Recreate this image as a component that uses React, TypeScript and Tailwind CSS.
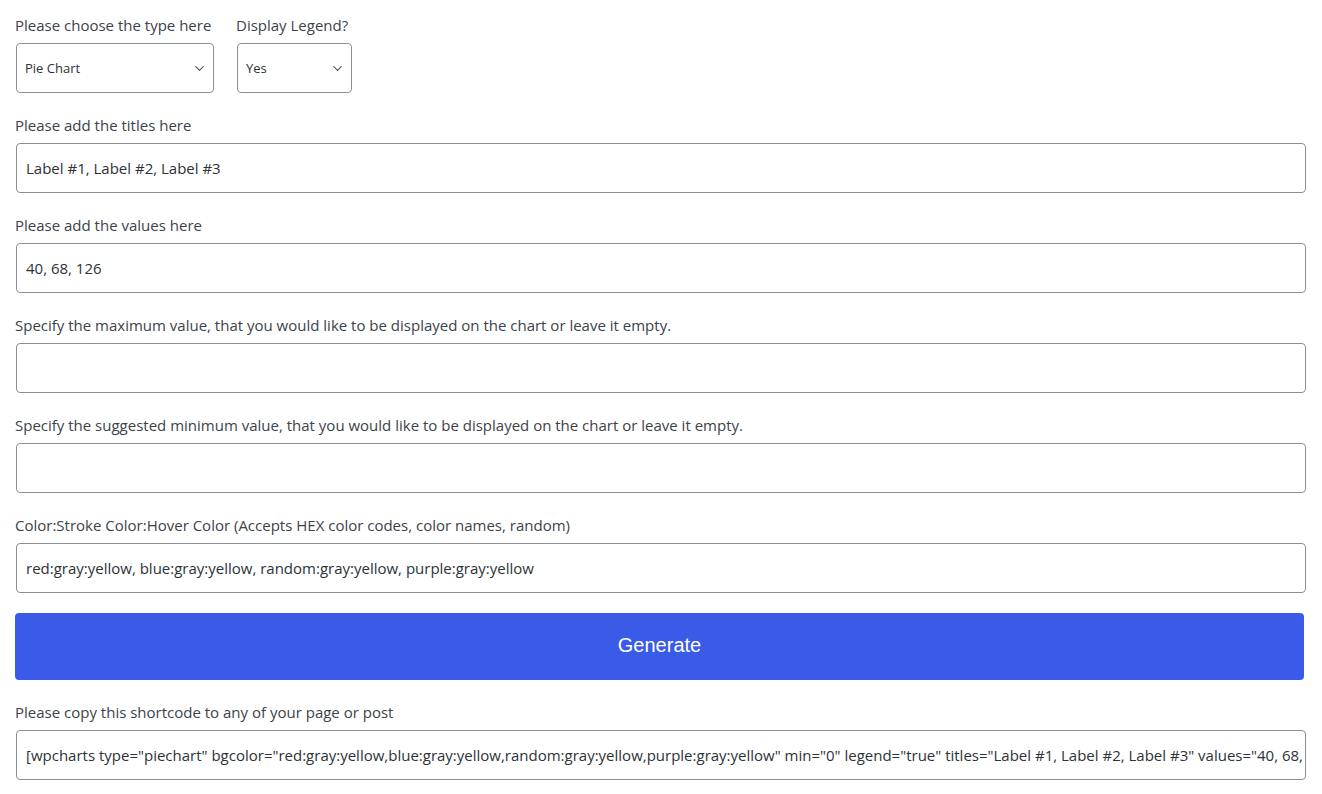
import { ChevronDown } from 'lucide-react';

const font = { fontFamily: '"Open Sans", "Noto Sans", sans-serif' };

function Field({ label, value }: { label: string; value?: string }) {
  return (
    <div className="flex flex-col">
      <label className="text-[15px] leading-6 text-[#3c434a]">{label}</label>
      <div className="mt-[6px] ml-px flex h-[50px] w-[1290px] items-center overflow-hidden rounded border border-[#8c8f94] bg-white px-[9px] pt-px">
        <span className="whitespace-nowrap text-[15px] text-[#2c3338]">{value}</span>
      </div>
    </div>
  );
}

function Select({ label, value, width }: { label: string; value: string; width: string }) {
  return (
    <div className="flex flex-col">
      <label className="whitespace-nowrap text-[15px] leading-6 text-[#3c434a]">{label}</label>
      <div className={`mt-[6px] ml-px flex h-[50px] items-center justify-between rounded border border-[#8c8f94] bg-white pl-[8px] pr-[6px] pt-px ${width}`}>
        <span className="text-[13px] text-[#2c3338]">{value}</span>
        <ChevronDown className="h-[15px] w-[15px] text-[#50575e]" strokeWidth={1.8} />
      </div>
    </div>
  );
}

export default function App() {
  const shortcode =
    '[wpcharts type="piechart" bgcolor="red:gray:yellow,blue:gray:yellow,random:gray:yellow,purple:gray:yellow" min="0" legend="true" titles="Label #1, Label #2, Label #3" values="40, 68, 126"]';
  return (
    <div className="min-h-screen bg-white pl-[15px] pt-[13px]" style={font}>
      <div className="flex gap-[22px]">
        <Select label="Please choose the type here" value="Pie Chart" width="w-[198px]" />
        <Select label="Display Legend?" value="Yes" width="w-[115px]" />
      </div>
      <div className="mt-[20px] flex flex-col gap-[20px]">
        <Field label="Please add the titles here" value="Label #1, Label #2, Label #3" />
        <Field label="Please add the values here" value="40, 68, 126" />
        <Field label="Specify the maximum value, that you would like to be displayed on the chart or leave it empty." />
        <Field label="Specify the suggested minimum value, that you would like to be displayed on the chart or leave it empty." />
        <Field
          label="Color:Stroke Color:Hover Color (Accepts HEX color codes, color names, random)"
          value="red:gray:yellow, blue:gray:yellow, random:gray:yellow, purple:gray:yellow"
        />
      </div>
      <button
        className="mt-[20px] flex h-[67px] w-[1289px] items-center justify-center rounded bg-[#3a5ae8] pb-[3px] text-[20px] text-white"
        style={{ fontFamily: '"Liberation Sans", Arial, sans-serif' }}
      >
        Generate
      </button>
      <div className="mt-[20px]">
        <Field label="Please copy this shortcode to any of your page or post" value={shortcode} />
      </div>
    </div>
  );
}
